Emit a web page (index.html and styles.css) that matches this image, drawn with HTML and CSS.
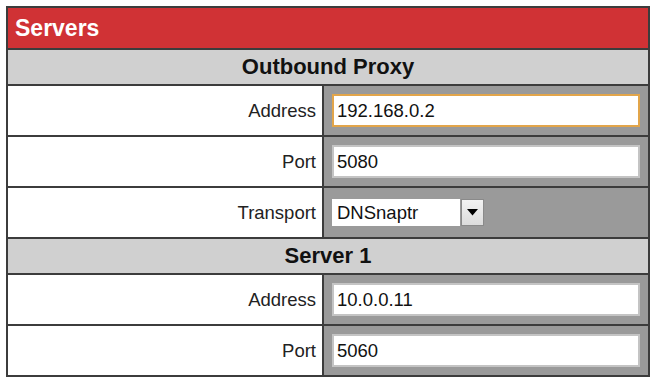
FILE: index.html
```html
<!DOCTYPE html>
<html lang="en">
<head>
    <meta charset="UTF-8">
    <meta name="viewport" content="width=device-width, initial-scale=1.0">
    <title>Servers</title>
    <link rel="stylesheet" href="styles.css">
</head>
<body>

    <table class="servers">
        <tr>
            <th colspan="2" class="title">Servers</th>
        </tr>
        <tr>
            <th colspan="2" class="section">Outbound Proxy</th>
        </tr>
        <tr>
            <td class="label"><label for="proxyAddress">Address</label></td>
            <td class="value"><input type="text" id="proxyAddress" class="focused" value="192.168.0.2"></td>
        </tr>
        <tr>
            <td class="label"><label for="proxyPort">Port</label></td>
            <td class="value"><input type="text" id="proxyPort" value="5080"></td>
        </tr>
        <tr>
            <td class="label"><label for="proxyTransport">Transport</label></td>
            <td class="value">
                <div class="select-box">
                    <select id="proxyTransport">
                        <option>DNSnaptr</option>
                        <option>UDP</option>
                        <option>TCP</option>
                        <option>TLS</option>
                    </select>
                    <span class="select-btn">
                        <svg width="11" height="7" viewBox="0 0 11 7"><path d="M0 0h11L5.5 6.5z" fill="#000"/></svg>
                    </span>
                </div>
            </td>
        </tr>
        <tr>
            <th colspan="2" class="section">Server 1</th>
        </tr>
        <tr>
            <td class="label"><label for="server1Address">Address</label></td>
            <td class="value"><input type="text" id="server1Address" value="10.0.0.11"></td>
        </tr>
        <tr>
            <td class="label"><label for="server1Port">Port</label></td>
            <td class="value"><input type="text" id="server1Port" value="5060"></td>
        </tr>
    </table>

</body>
</html>
```

FILE: styles.css
```css
body {
    font-family: "Liberation Sans", Arial, sans-serif;
    background-color: #fff;
    margin: 0;
    padding: 6px;
}

.servers {
    width: 644px;
    border-collapse: collapse;
    border: 2px solid #3c3c3c;
}

.servers th,
.servers td {
    border: 2px solid #3c3c3c;
    padding: 0;
}

.title {
    height: 40px;
    background-color: #d03235;
    color: #fff;
    font-size: 23px;
    font-weight: bold;
    text-align: left;
    padding-left: 7px !important;
}

.section {
    height: 34px;
    background-color: #d0d0d0;
    color: #111;
    font-size: 22px;
    font-weight: bold;
    text-align: center;
}

.label {
    width: 308px;
    height: 49px;
    background-color: #fff;
    text-align: right;
    padding-right: 6px !important;
    font-size: 18.5px;
    color: #222;
}

.value {
    background-color: #9a9a9a;
    padding-left: 8px !important;
}

input {
    width: 308px;
    height: 33px;
    padding: 0 3px;
    border: 2px solid #c4c4c4;
    background: #fff;
    font-family: inherit;
    font-size: 18.5px;
    color: #111;
    box-sizing: border-box;
    outline: none;
    display: block;
}

input.focused {
    border-color: #e2a54a;
}

.select-box {
    display: flex;
    align-items: stretch;
    gap: 1px;
    width: 152px;
    height: 27px;
}

select {
    appearance: none;
    -webkit-appearance: none;
    width: 128px;
    border: none;
    background: #fff;
    font-family: inherit;
    font-size: 18.5px;
    color: #111;
    padding: 0 0 0 5px;
    outline: none;
}

.select-btn {
    width: 23px;
    display: flex;
    align-items: center;
    justify-content: center;
    background: linear-gradient(#f2f2f2, #dcdcdc);
    border: 1px solid #8a8a8a;
    box-sizing: border-box;
}
```
